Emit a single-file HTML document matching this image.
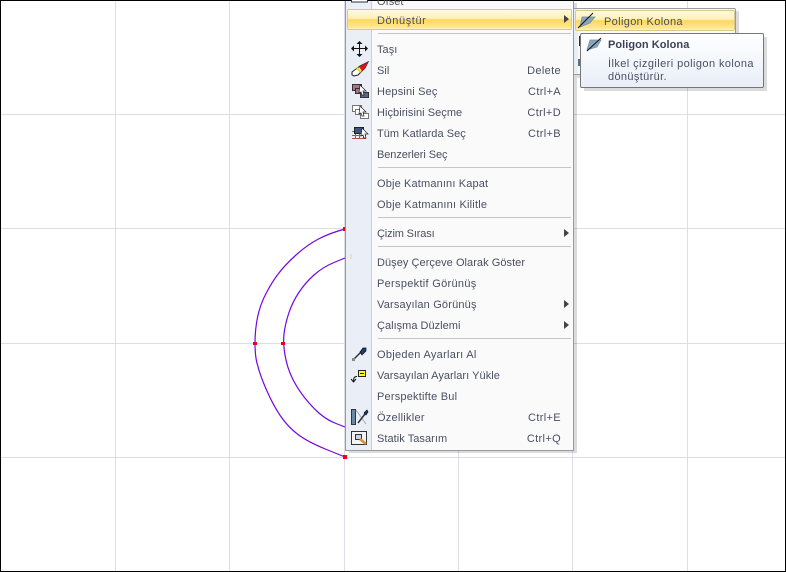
<!DOCTYPE html>
<html><head><meta charset="utf-8"><style>
html,body{margin:0;padding:0;background:#fff}
#r{position:relative;width:786px;height:572px;overflow:hidden;background:#fff;font-family:"Liberation Sans",sans-serif;font-size:11px;color:#4a4f63;letter-spacing:.05px}
#r div{position:absolute}
.t{white-space:nowrap;line-height:14px;left:377px}
.k{white-space:nowrap;line-height:14px;right:225px;letter-spacing:.35px}
.s{left:378px;width:193px;height:1px;background:#c5c5c5}
.a{left:564px;width:0;height:0;border-left:5px solid #444;border-top:4px solid transparent;border-bottom:4px solid transparent}
.hl{background:linear-gradient(#fefadf 0,#fff0b8 45%,#ffd75e 50%,#ffe78f 90%,#fff3c0 100%);border:1px solid #d9c88d;border-radius:2px;box-sizing:border-box}
</style></head><body><div id="r">
<svg style="position:absolute;left:0;top:0" width="786" height="572">
<g stroke="#dddde8" stroke-width="1" fill="none" shape-rendering="crispEdges">
<path d="M115.5 0V572M229.5 0V572M344.5 0V572M458.5 0V572M572.5 0V572M687.5 0V572M0 114.5H786M0 228.5H786M0 343.5H786M0 457.5H786"/>
</g>
<g stroke="#7008e0" stroke-width="1.2" fill="none">
<path d="M345 229Q330 233 318.5 239Q307 245 296 255Q285 265 278.5 273.5Q272 282 266 293.5Q260 305 257.5 317.5Q255 330 255 343Q255 358 258 366.500Q260 375 266.5 390Q273 405 280.5 416Q288 427 298 434.5Q308 442 326.5 449.5L345 457"/>
<path d="M345 258L334 262.5Q323 267 314 275Q305 283 298.5 293Q292 303 288.5 314Q285 325 284 334Q283 343 285 355Q287 367 292 377.5Q297 388 304.5 397.5Q312 407 319.5 413.5Q327 420 336 423.5L345 427"/>
</g>
<g fill="#f00010"><rect x="253" y="342" width="4" height="3"/><rect x="281" y="342" width="4" height="3"/><rect x="343" y="227" width="3" height="4"/><rect x="343" y="455" width="4" height="4"/></g>
<rect x="0.5" y="0.5" width="785" height="571" fill="none" stroke="#000" stroke-width="1" shape-rendering="crispEdges"/>
</svg>

<!-- main menu -->
<div style="left:349px;top:3px;width:228px;height:450px;background:rgba(0,0,0,.14)"></div>
<div style="left:345px;top:1px;width:229px;height:450px;box-sizing:border-box;background:#fafafa;border:1px solid #9a9a9a;border-top:0"></div>
<div style="left:346px;top:1px;width:25px;height:449px;background:#e9eef7;border-right:1px solid #c9ced8"></div>
<div class="hl" style="left:347px;top:9px;width:225px;height:21px"></div>
<div class="a" style="left:564px;top:15px"></div>

<div class="t" style="top:-5px;color:#555">Ofset</div>
<div class="t" style="top:14px;letter-spacing:.6px">Dönüştür</div>
<div class="s" style="top:33px"></div>
<div class="t" style="top:43px">Taşı</div>
<div class="t" style="top:64px">Sil</div><div class="k" style="top:64px">Delete</div>
<div class="t" style="top:85px;letter-spacing:.17px">Hepsini Seç</div><div class="k" style="top:85px">Ctrl+A</div>
<div class="t" style="top:106px">Hiçbirisini Seçme</div><div class="k" style="top:106px">Ctrl+D</div>
<div class="t" style="top:127px">Tüm Katlarda Seç</div><div class="k" style="top:127px">Ctrl+B</div>
<div class="t" style="top:148px;letter-spacing:-.08px">Benzerleri Seç</div>
<div class="s" style="top:167px"></div>
<div class="t" style="top:177px;letter-spacing:.15px">Obje Katmanını Kapat</div>
<div class="t" style="top:198px;letter-spacing:.2px">Obje Katmanını Kilitle</div>
<div class="s" style="top:217px"></div>
<div class="t" style="top:227px;letter-spacing:-.15px">Çizim Sırası</div><div class="a" style="top:229px"></div>
<div class="s" style="top:246px"></div>
<div class="t" style="top:256px">Düşey Çerçeve Olarak Göster</div>
<div class="t" style="top:277px;letter-spacing:.3px">Perspektif Görünüş</div>
<div class="t" style="top:298px;letter-spacing:.18px">Varsayılan Görünüş</div><div class="a" style="top:300px"></div>
<div class="t" style="top:319px;letter-spacing:.02px">Çalışma Düzlemi</div><div class="a" style="top:321px"></div>
<div class="s" style="top:338px"></div>
<div class="t" style="top:348px;letter-spacing:.3px">Objeden Ayarları Al</div>
<div class="t" style="top:369px">Varsayılan Ayarları Yükle</div>
<div class="t" style="top:390px;letter-spacing:.2px">Perspektifte Bul</div>
<div class="t" style="top:411px;letter-spacing:.25px">Özellikler</div><div class="k" style="top:411px">Ctrl+E</div>
<div class="t" style="top:432px;letter-spacing:.05px">Statik Tasarım</div><div class="k" style="top:432px">Ctrl+Q</div>

<svg style="position:absolute;left:346px;top:0" width="26" height="450">
<rect x="5.500" y="-4" width="16" height="6" fill="#fff" stroke="#333"/>
<!-- move -->
<g stroke="#111" fill="#111" stroke-width="1">
<path d="M13.500 42V56M6 48.500H21" fill="none"/>
<path d="M13.500 41l-3 3h6zM13.500 57l-3-3h6zM5 48.500l3-3v6zM22 48.500l-3-3v6z" stroke="none"/>
</g>
<!-- eraser -->
<path d="M6 72L14 66L22 62L19 68L12 75L8 76L6 75Z" fill="#fff" stroke="#222"/>
<path d="M13 67L22 62L19 68L16 71Z" fill="#e01020"/>
<path d="M11 68L15 72" stroke="#e8d820" stroke-width="2"/>
<!-- select all -->
<g stroke="#333">
<rect x="6.500" y="84.500" width="9" height="6" fill="#a87488"/>
<rect x="9.500" y="88.500" width="7" height="5" fill="#a87488"/>
<rect x="14.500" y="92.500" width="8" height="5" fill="#5c6488"/>
</g>
<path d="M14 85L20 91L17 91L18 95L16 95L15 92L13 93Z" fill="#fff" stroke="#222" stroke-width=".7"/>
<!-- select none -->
<g stroke="#777" fill="#fff">
<rect x="6.500" y="105.500" width="9" height="6"/>
<rect x="9.500" y="109.500" width="7" height="5"/>
<rect x="14.500" y="113.500" width="8" height="5"/>
</g>
<path d="M14 106L20 112L17 112L18 116L16 116L15 113L13 114Z" fill="#fff" stroke="#222" stroke-width=".7"/>
<!-- all floors -->
<path d="M6 131.500H20M6 135.500H20M6 138.500H20M9.500 130V139M13.500 130V139M17.500 130V139" stroke="#b05050" fill="none"/>
<rect x="8.500" y="127.500" width="9" height="6" fill="#46507e" stroke="#222"/>
<path d="M16 128L22 134L19 134L20 138L18 138L17 135L15 136Z" fill="#fff" stroke="#222" stroke-width=".7"/>
<!-- faint mark -->
<rect x="4.500" y="254" width="1" height="5" fill="#e8d890"/>
<!-- eyedropper -->
<path d="M8 359L16 351" stroke="#333" stroke-width="1.500"/>
<path d="M14 352L17 348L20 348L20 351L16 355Z" fill="#1c3c6c" stroke="#112" stroke-width=".7"/>
<rect x="6" y="358" width="3" height="3" fill="#888"/>
<!-- load defaults -->
<rect x="12.500" y="370.500" width="7" height="6" fill="#ffff20" stroke="#222"/>
<path d="M14 373.500H18" stroke="#222"/>
<path d="M11 376.500C8 376.500 7.500 378 7.500 382" stroke="#111" fill="none"/>
<path d="M5 379L7.500 382L10 379" stroke="#111" fill="none"/>
<!-- properties -->
<rect x="5.500" y="409.500" width="4" height="15" fill="#6c88a8" stroke="#333"/>
<path d="M10 410L20 424" stroke="#aaa"/>
<path d="M12 423L19 414" stroke="#333" stroke-width="1.500"/>
<path d="M18 413L21 410L22 412L20 415Z" fill="#1c3c6c" stroke="#112" stroke-width=".7"/>
<!-- static -->
<rect x="5.500" y="431.500" width="15" height="13" fill="#f4f4f4" stroke="#333"/>
<rect x="9.500" y="434.500" width="6" height="5" fill="#d0d0e0" stroke="#333"/>
<path d="M14 439L20 444" stroke="#d89030" stroke-width="2.500"/>
</svg>

<!-- submenu -->
<div style="left:577px;top:11px;width:162px;height:67px;background:rgba(0,0,0,.14)"></div>
<div style="left:573px;top:8px;width:163px;height:67px;box-sizing:border-box;background:#fafafa;border:1px solid #9a9a9a;border-radius:2px"></div>
<div style="left:574px;top:9px;width:4px;height:65px;background:#e9eef7"></div>
<div class="hl" style="left:575px;top:10px;width:160px;height:21px"></div>
<div class="t" style="left:604px;top:15px;letter-spacing:.35px">Poligon Kolona</div>
<svg style="position:absolute;left:577px;top:11px" width="20" height="18">
<path d="M5 6H18L13 12L3 16Z" fill="#8aa6bc" stroke="#6b8aa2" stroke-width=".7"/>
<path d="M1 17L16 2" stroke="#111"/>
</svg>
<div style="left:579px;top:36px;width:3px;height:10px;background:#1a2a80"></div>
<div style="left:578px;top:59px;width:3px;height:7px;background:#54708c"></div>

<!-- tooltip -->
<div style="left:584px;top:37px;width:183px;height:54px;background:rgba(0,0,0,.14)"></div>
<div style="left:580px;top:33px;width:184px;height:55px;box-sizing:border-box;background:linear-gradient(#fff,#e9eef8);border:1px solid #767676;border-radius:2px"></div>
<svg style="position:absolute;left:585px;top:35px" width="20" height="18">
<path d="M5 5H16L12 12L2 15Z" fill="#8aa6bc" stroke="#6b8aa2" stroke-width=".7"/>
<path d="M2 16L16 3" stroke="#111"/>
</svg>
<div class="t" style="left:608px;top:38px;font-weight:bold;color:#3c4258;letter-spacing:.05px">Poligon Kolona</div>
<div class="t" style="left:608px;top:57px;letter-spacing:.42px">İlkel çizgileri poligon kolona</div>
<div class="t" style="left:608px;top:70px;letter-spacing:.35px">dönüştürür.</div>
</div></body></html>
